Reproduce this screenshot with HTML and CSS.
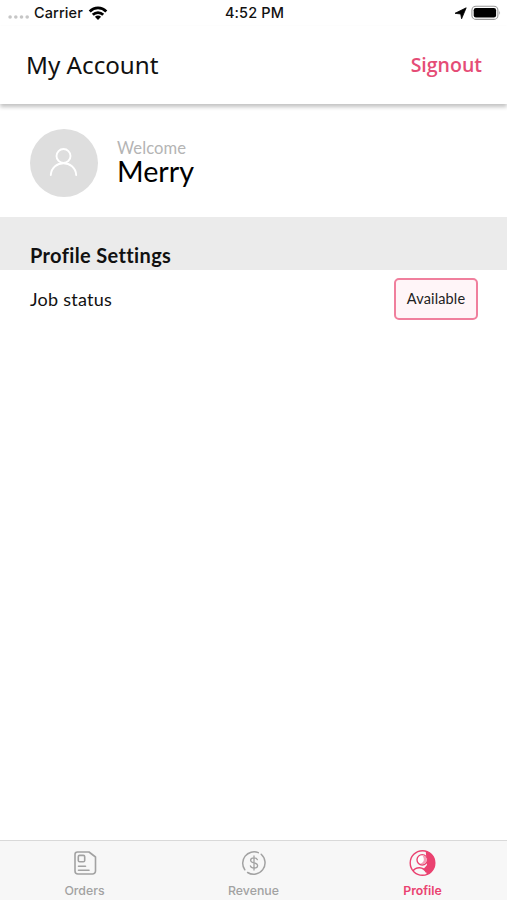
FILE: index.html
```html
<!DOCTYPE html>
<html lang="en">
<head>
<meta charset="utf-8">
<title>My Account</title>
<link rel="stylesheet" href="styles.css">
</head>
<body>
<div class="statusbar">
  <div class="carrier">
    <svg class="signal" width="22" height="6" viewBox="0 0 22 6" fill="#c6c6c6"><circle cx="2.1" cy="3" r="1.8"/><circle cx="7.8" cy="3" r="1.8"/><circle cx="13.5" cy="3" r="1.8"/><circle cx="19.2" cy="3" r="1.8"/></svg>
    <span class="carrier-name">Carrier</span>
    <svg class="wifi" width="20" height="14" viewBox="0 0 20 14" fill="none" stroke="#000" stroke-width="2.8"><path d="M1.7 5.4C6.4.8 13.6.8 18.3 5.4"/><path d="M4.8 8.8c3-2.9 7.4-2.900 10.400 0"/><path d="M10 13.900 6.900 10.700q3.100-2.400 6.200 0z" fill="#000" stroke="none"/></svg>
  </div>
  <span class="time">4:52 PM</span>
  <div class="power">
    <svg width="13" height="13" viewBox="0 0 13 13"><path d="M12.200.8 7.600 11.800 6.700 7 1 6.300z" fill="#000" stroke="#000" stroke-width=".8" stroke-linejoin="round"/></svg>
    <svg width="30" height="16" viewBox="0 0 30 16"><rect x=".9" y="1.200" width="26" height="13.200" rx="4" fill="#fff" stroke="#999" stroke-width="1.100"/><rect x="2.700" y="3.100" width="22.400" height="9.400" rx="2.200"/><path d="M28.300 5.500q1.500 2.300 0 4.600z" fill="#999"/></svg>
  </div>
</div>
<header class="header">
  <h1 class="title">My Account</h1>
  <a class="signout">Signout</a>
</header>
<main class="content">
  <section class="welcome">
    <div class="avatar">
      <svg width="30" height="30" viewBox="0 0 30 30" fill="none" stroke="#fff" stroke-width="1.900" stroke-linecap="round"><circle cx="14.500" cy="8" r="7"/><path d="M1.800 27C2.800 11.300 26.200 11.300 27.200 27"/></svg>
    </div>
    <div class="person"><span class="greeting">Welcome</span><span class="name">Merry</span></div>
  </section>
  <h2 class="section-title"><span>Profile Settings</span></h2>
  <div class="row"><span class="label">Job status</span><button class="status">Available</button></div>
</main>
<nav class="tabs">
  <div class="tab">
    <svg width="28" height="28" viewBox="0 0 28 28" fill="none" stroke="#a2a2a2" stroke-width="1.600" stroke-linejoin="round" stroke-linecap="round"><path d="M6.500 3h11.500l6.500 5v14a3 3 0 0 1-3 3H7a3 3 0 0 1-3-3V5.500A2.500 2.500 0 0 1 6.500 3z"/><rect x="7.300" y="6.400" width="6.400" height="6.400" rx="1.300"/><path d="M7.500 17.300h7M7.500 21.200h10.500"/></svg>
    <span class="tab-label">Orders</span>
  </div>
  <div class="tab">
    <svg width="28" height="28" viewBox="0 0 28 28" fill="none" stroke="#a2a2a2" stroke-width="1.500" stroke-linecap="round"><path d="M18.300 3.600A11.400 11.400 0 0 0 4.800 20.800"/><path d="M21.200 5.300A11.400 11.400 0 0 1 7.600 23.500"/><path d="M17.400 10.700c-.5-1.300-1.700-1.900-3.400-1.900-2 0-3.400.9-3.400 2.400 0 3.500 7 1.900 7 5.300 0 1.600-1.500 2.600-3.600 2.600-1.900 0-3.200-.8-3.600-2.200M14 7v14" stroke-width="1.300"/></svg>
    <span class="tab-label">Revenue</span>
  </div>
  <div class="tab active">
    <svg width="28" height="28" viewBox="0 0 28 28"><defs><clipPath id="disc"><circle cx="13.500" cy="14" r="12.500"/></clipPath></defs><g clip-path="url(#disc)"><path d="M16.500 0H28v28H17.500v-4.500L14.500 20l3.500-4z" fill="#ea4270"/><circle cx="13.200" cy="10.800" r="5.200" fill="#fff" stroke="#ea4270" stroke-width="1.400"/><path d="M13.200 6.300a4.500 4.500 0 1 1-2.200 8.400c4.300-.8 5-5 2.200-8.400" fill="#f5a0b7"/><path d="M3.500 22.500c3.500-5 10.500-5.200 14 1" fill="none" stroke="#ea4270" stroke-width="1.400"/></g><circle cx="13.500" cy="14" r="12.300" fill="none" stroke="#ea4270" stroke-width="1.400"/></svg>
    <span class="tab-label profile">Profile</span>
  </div>
</nav>
</body>
</html>
```
FILE: styles.css
```css
* { box-sizing: border-box; }
body {
  margin: 0;
  width: 507px;
  height: 900px;
  display: flex;
  flex-direction: column;
  overflow: hidden;
  background: #fff;
  color: #111;
  font-family: "Open Sans", sans-serif;
  font-variant-ligatures: none;
}
svg { display: block; flex: none; }
.statusbar {
  height: 26px;
  flex: none;
  display: grid;
  grid-template-columns: 1fr auto 1fr;
  align-items: center;
  padding: 0 6px 0 8px;
  font: 500 14.500px/26px Inter, sans-serif;
}
.carrier, .power { display: flex; align-items: center; }
.carrier-name { margin-left: 4px; letter-spacing: .1px; }
.signal { margin-top: 8px; }
.wifi { margin-left: 5px; }
.time { letter-spacing: .12px; }
.power { justify-content: flex-end; gap: 4px; }
.header {
  height: 78px;
  flex: none;
  display: flex;
  align-items: center;
  justify-content: space-between;
  padding: 0 25px 0 26px;
  box-shadow: 0 3px 4px rgba(0, 0, 0, .24);
}
.title { margin: 0; font: 400 24.200px/32px "Noto Sans", sans-serif; }
.signout { color: #e54c76; font: 600 19.500px/30px "Open Sans", sans-serif; }
.content { flex: 1; font-family: Lato, sans-serif; }
.welcome { height: 113px; padding: 25px 30px 0; display: flex; gap: 19px; }
.avatar {
  width: 68px;
  height: 68px;
  border-radius: 50%;
  background: #dedede;
  display: flex;
  align-items: center;
  justify-content: center;
}
.person { display: flex; flex-direction: column; padding-top: 10px; }
.greeting { color: #b4b4b4; font-size: 16.600px; line-height: 18px; letter-spacing: .1px; }
.name { font-size: 28.700px; line-height: 28px; color: #000; }
.section-title {
  margin: 0;
  height: 53px;
  padding: 26px 30px 0;
  background: #ebebeb;
  font-size: 20px;
  line-height: 24px;
  font-weight: 700;
  letter-spacing: .36px;
}
.row { display: flex; align-items: center; justify-content: space-between; height: 58px; padding: 0 29px 0 30px; }
.label { font-size: 18px; letter-spacing: .25px; }
.status {
  width: 84px;
  height: 42px;
  padding: 0 0 2px;
  border: 2px solid #f07f9d;
  border-radius: 5px;
  background: #fff5f8;
  color: #222;
  font: 400 14.500px Lato, sans-serif;
  letter-spacing: .15px;
}
.tabs {
  height: 60px;
  flex: none;
  display: grid;
  grid-template-columns: repeat(3, 1fr);
  border-top: 1px solid #d9d9d9;
  background: #f7f7f7;
  color: #a2a2a2;
}
.tab { display: flex; flex-direction: column; align-items: center; padding-top: 8px; }
.tab-label { margin-top: 5px; font: 500 12.300px/18px Inter, sans-serif; }
.active { color: #ea4270; }
.active .profile { font-weight: 600; }
```
